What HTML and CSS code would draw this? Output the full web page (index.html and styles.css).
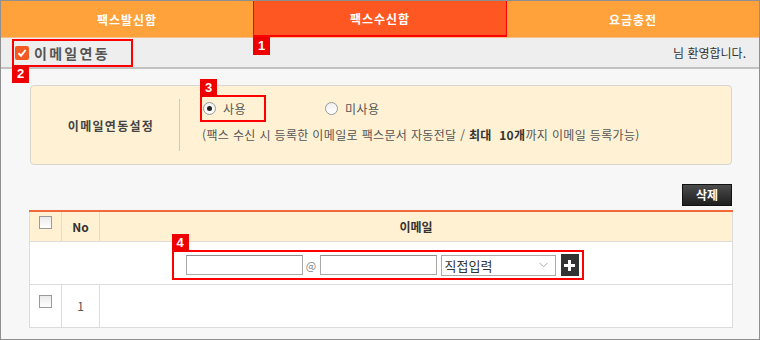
FILE: index.html
```html
<!DOCTYPE html>
<html lang="ko">
<head>
<meta charset="utf-8">
<link rel="stylesheet" href="styles.css">
</head>
<body>
<div class="frame">
  <div class="tabs">
    <div class="tab">팩스발신함</div>
    <div class="tab active">팩스수신함<span class="badge badge-below">1</span></div>
    <div class="tab">요금충전</div>
  </div>
  <div class="band">
    <div class="mark mark-link">
      <span class="ocheck"><svg width="10" height="10" viewBox="0 0 10 10"><path d="M1.5 5.2 L4 7.8 L8.6 2" fill="none" stroke="#fff" stroke-width="2"/></svg></span>
      <span class="link-title">이메일연동</span>
      <span class="badge badge-below">2</span>
    </div>
    <div class="welcome">님 환영합니다.</div>
  </div>
  <div class="main">
    <div class="setting">
      <div class="setting-label">이메일연동설정</div>
      <div class="divider"></div>
      <div class="setting-body">
        <div class="radios">
          <div class="mark mark-radio">
            <span class="radio on"></span><span class="rlabel">사용</span>
            <span class="badge badge-above">3</span>
          </div>
          <div class="radio-item">
            <span class="radio"></span><span class="rlabel">미사용</span>
          </div>
        </div>
        <div class="help">(팩스 수신 시 등록한 이메일로 팩스문서 자동전달 / <b>최대&nbsp; 10개</b>까지 이메일 등록가능)</div>
      </div>
    </div>
    <div class="actions"><button class="btn-del">삭제</button></div>
    <table class="list">
      <colgroup><col class="c1"><col class="c2"><col></colgroup>
      <thead>
        <tr><th class="cbcell"><span class="cb"></span></th><th>No</th><th>이메일</th></tr>
      </thead>
      <tbody>
        <tr class="addrow">
          <td colspan="3">
            <div class="mark mark-add">
              <input class="tin" type="text">
              <span class="at">@</span>
              <input class="tin" type="text">
              <div class="sel"><span>직접입력</span><svg width="9" height="6" viewBox="0 0 9 6"><path d="M0.5 0.8 L4.5 4.8 L8.5 0.8" fill="none" stroke="#aaa" stroke-width="1"/></svg></div>
              <span class="plus"><svg width="11" height="11" viewBox="0 0 11 11"><rect x="4" y="0" width="3" height="11" fill="#fff"/><rect x="0" y="4" width="11" height="3" fill="#fff"/></svg></span>
              <span class="badge badge-above">4</span>
            </div>
          </td>
        </tr>
        <tr class="datarow">
          <td class="cbcell"><span class="cb"></span></td><td class="num">1</td><td></td>
        </tr>
      </tbody>
    </table>
  </div>
</div>
</body>
</html>
```
FILE: styles.css
```css
* { box-sizing: border-box; }
html, body { margin: 0; padding: 0; background: #fff; }
body {
  font-family: "Noto Sans CJK KR", "Noto Sans", "Liberation Sans", sans-serif;
  font-size: 12px;
  color: #333;
}
.frame {
  width: 760px;
  height: 340px;
  border: 1px solid #8f8f8f;
  background: #f7f7f7;
  overflow: hidden;
}
.tabs {
  display: flex;
  height: 37px;
  border-bottom: 1px solid #fbbf8e;
}
.tab {
  position: relative;
  flex: 0 0 252px;
  display: flex;
  align-items: center;
  justify-content: center;
  background: #ffa23b;
  color: #fff;
  font-weight: bold;
  font-size: 12px;
  letter-spacing: 1px;
}
.tab.active {
  flex-basis: 254px;
  background: #ff5722;
  border: 1px solid #ff0000;
  border-top: 0;
  border-bottom-width: 2px;
}
.band {
  height: 31px;
  background: #eeeeee;
  border-bottom: 2px solid #c2c2c2;
  display: flex;
  align-items: center;
  justify-content: space-between;
  padding: 0 13px 0 11px;
}
.mark {
  position: relative;
  border: 2px solid #ff0000;
  display: flex;
  align-items: center;
}
.badge {
  position: absolute;
  left: -2px;
  width: 17px;
  height: 18px;
  background: #ee0000;
  color: #fff;
  font-family: "Liberation Sans", sans-serif;
  font-weight: bold;
  font-size: 13px;
  line-height: 18px;
  text-align: center;
  letter-spacing: 0;
}
.badge-below { top: 100%; }
.tab .badge-below { left: -1px; top: calc(100% + 2px); }
.badge-above { bottom: 100%; }
.mark-link {
  width: 121px;
  height: 28px;
  padding-left: 1px;
}
.ocheck {
  width: 14px;
  height: 14px;
  border-radius: 2px;
  background: #f25a22;
  display: flex;
  align-items: center;
  justify-content: center;
}
.link-title {
  margin-left: 5px;
  font-size: 14px;
  font-weight: bold;
  color: #555;
  letter-spacing: 2.3px;
}
.welcome {
  font-size: 12px;
  color: #333;
}
.main {
  padding: 16px 27px 0 28px;
}
.setting {
  margin-left: 1px;
  height: 80px;
  background: #fff1d3;
  border: 1px solid #d9d6cf;
  border-radius: 4px;
  display: flex;
  align-items: center;
}
.setting-label {
  width: 148px;
  padding-left: 12px;
  text-align: center;
  font-weight: bold;
  color: #444;
  letter-spacing: 1.3px;
}
.divider {
  width: 1px;
  height: 52px;
  background: #cfcabd;
}
.setting-body {
  align-self: flex-start;
  padding: 9px 0 0 20px;
  display: flex;
  flex-direction: column;
}
.radios {
  display: flex;
  align-items: center;
}
.mark-radio {
  width: 66px;
  height: 27px;
  padding-left: 1px;
}
.radio-item {
  display: flex;
  align-items: center;
  margin-left: 59px;
}
.radio {
  width: 13px;
  height: 13px;
  border-radius: 50%;
  border: 1px solid #9a9a9a;
  background: linear-gradient(#f0f0f0, #fff);
  display: flex;
  align-items: center;
  justify-content: center;
}
.radio.on::after {
  content: "";
  width: 5px;
  height: 5px;
  border-radius: 50%;
  background: #222;
}
.rlabel {
  margin-left: 7px;
  color: #555;
  font-size: 12px;
  letter-spacing: 0.5px;
}
.help {
  margin-top: 5px;
  margin-left: 2px;
  color: #555;
  font-size: 12px;
  line-height: 16px;
  white-space: nowrap;
  letter-spacing: 0.35px;
}
.help b { color: #333; }
.actions {
  display: flex;
  justify-content: flex-end;
  margin-top: 19px;
}
.btn-del {
  width: 50px;
  height: 22px;
  border: 1px solid #111;
  background: linear-gradient(#4c4c4c, #1e1e1e);
  color: #fff;
  font-family: inherit;
  font-weight: bold;
  font-size: 12px;
  padding: 0;
  line-height: 18px;
}
.list {
  margin-top: 4px;
  width: 704px;
  border-collapse: collapse;
  border-top: 2px solid #f3683b;
  background: #fff;
}
.c1 { width: 32px; }
.c2 { width: 38px; }
.list th, .list td {
  border: 1px solid #dcdcdc;
  padding: 0;
  text-align: center;
}
.list th {
  height: 30px;
  background: #fff1d2;
  font-weight: bold;
  color: #333;
  border-top: 0;
}
.cb {
  display: inline-block;
  width: 13px;
  height: 13px;
  border: 1px solid #9a9a9a;
  background: linear-gradient(#eaeaea, #fff);
}
.list th.cbcell { vertical-align: top; padding-top: 3px; }
.list td.cbcell { vertical-align: top; padding-top: 9px; }
.addrow td { height: 43px; }
.datarow td { height: 43px; }
.num { color: #555; }
.mark-add {
  display: inline-flex;
  vertical-align: middle;
  width: 412px;
  height: 30px;
  padding-left: 12px;
  margin-top: 5px;
  margin-left: -7px;
}
.tin {
  width: 117px;
  height: 20px;
  border: 1px solid #a8a8a8;
  border-top-color: #8e8e8e;
  padding: 0;
  margin: 0;
  background: #fff;
}
.at {
  width: 17px;
  text-align: center;
  color: #888;
  font-size: 11px;
}
.sel {
  margin-left: 4px;
  width: 115px;
  height: 21px;
  border: 1px solid #aaa;
  display: flex;
  align-items: center;
  justify-content: space-between;
  padding: 0 7px 0 3px;
  font-size: 13px;
  color: #333;
  background: #fff;
}
.plus {
  margin-left: 5px;
  width: 18px;
  height: 22px;
  background: #333;
  display: flex;
  align-items: center;
  justify-content: center;
}
```
